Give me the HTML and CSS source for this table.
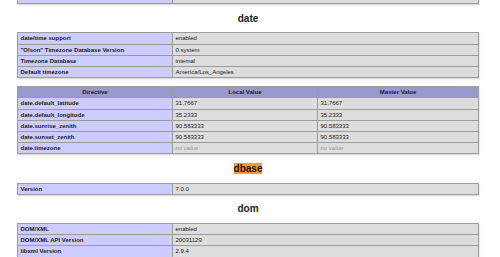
FILE: index.html
```html
<!DOCTYPE html>
<html>
<head>
<meta charset="utf-8">
<title>phpinfo()</title>
<link rel="stylesheet" href="styles.css">
</head>
<body>
<div class="center">
<table class="cut">
<colgroup><col class="ce"><col></colgroup>
<tr><td class="e">&nbsp;</td><td class="v">&nbsp;</td></tr>
</table>

<h2>date</h2>
<table>
<colgroup><col class="ce"><col></colgroup>
<tr><td class="e">date/time support </td><td class="v">enabled </td></tr>
<tr><td class="e">"Olson" Timezone Database Version </td><td class="v">0.system </td></tr>
<tr><td class="e">Timezone Database </td><td class="v">internal </td></tr>
<tr><td class="e">Default timezone </td><td class="v">America/Los_Angeles </td></tr>
</table>
<table>
<colgroup><col class="ce"><col class="cl"><col></colgroup>
<tr class="h"><th>Directive</th><th>Local Value</th><th>Master Value</th></tr>
<tr><td class="e">date.default_latitude</td><td class="v">31.7667</td><td class="v">31.7667</td></tr>
<tr><td class="e">date.default_longitude</td><td class="v">35.2333</td><td class="v">35.2333</td></tr>
<tr><td class="e">date.sunrise_zenith</td><td class="v">90.583333</td><td class="v">90.583333</td></tr>
<tr><td class="e">date.sunset_zenith</td><td class="v">90.583333</td><td class="v">90.583333</td></tr>
<tr><td class="e">date.timezone</td><td class="v"><i>no value</i></td><td class="v"><i>no value</i></td></tr>
</table>

<h2><span class="found">dbase</span></h2>
<table>
<colgroup><col class="ce"><col></colgroup>
<tr><td class="e">Version </td><td class="v">7.0.0 </td></tr>
</table>

<h2>dom</h2>
<table>
<colgroup><col class="ce"><col></colgroup>
<tr><td class="e">DOM/XML </td><td class="v">enabled </td></tr>
<tr><td class="e">DOM/XML API Version </td><td class="v">20031129 </td></tr>
<tr><td class="e">libxml Version </td><td class="v">2.9.4 </td></tr>
</table>
</div>
</body>
</html>
```

FILE: styles.css
```css
html, body {
  margin: 0;
  padding: 0;
  background: #fff;
}

body {
  font-family: "Liberation Sans", Arial, sans-serif;
  color: #222;
}

.center {
  width: 496px;
  text-align: center;
}

table {
  border-collapse: collapse;
  border: 0;
  width: 462px;
  table-layout: fixed;
  margin: 8px auto;
  text-align: left;
  box-shadow: 0.5px 1px 1.5px #ccc;
}

table.cut {
  margin-top: -8px;
}

col.ce {
  width: 155px;
}

col.cl {
  width: 145px;
}

td, th {
  border: 1px solid #9c9c9c;
  font-size: 6px;
  line-height: 6.2px;
  padding: 2px 2.5px;
  vertical-align: middle;
  white-space: nowrap;
  overflow: hidden;
}

th {
  text-align: center;
}

.e {
  background-color: #ccf;
  font-weight: bold;
}

.h {
  background-color: #99c;
  font-weight: bold;
}

.v {
  background-color: #ddd;
}

.v i {
  color: #999;
}

h2 {
  font-size: 10px;
  line-height: 11.6px;
  margin: 8.3px 0;
  text-align: center;
  font-weight: bold;
}

.found {
  background-color: #ff9632;
  color: #111;
}
```
